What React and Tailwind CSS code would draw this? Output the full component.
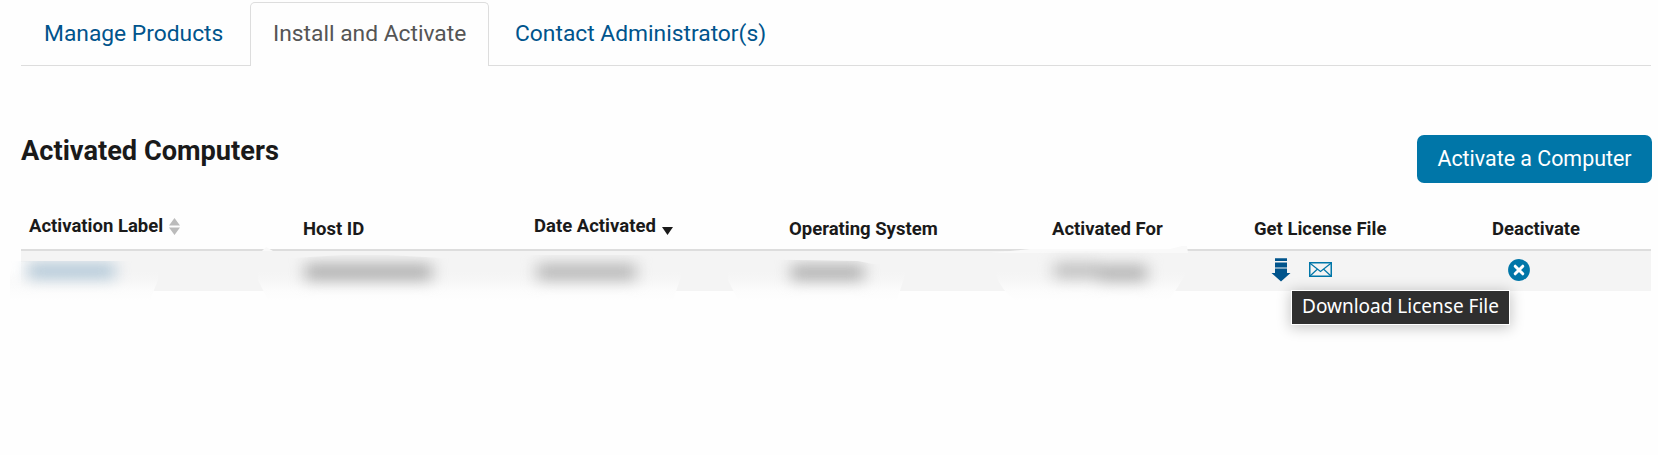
function Tab({ children, active, className }) {
  return (
    <a
      className={
        (active
          ? "border border-b-0 border-[#dddddd] rounded-t-[5px] bg-[#fefefe] text-[#555555] "
          : "border border-transparent text-[#00548c] ") +
        "flex h-[64px] items-start pt-[15px] text-[22.8px] leading-[32px] whitespace-nowrap " +
        className
      }
    >
      {children}
    </a>
  );
}

function SortIcon() {
  return (
    <svg className="ml-[6px] h-[17px] w-[11px] shrink-0" viewBox="0 0 11 17" fill="#bbbbbb">
      <path d="M0 7.500 5.500 0 11 7.500zM0 9.500h11L5.500 17z" />
    </svg>
  );
}

function DownCaret() {
  return (
    <svg className="mt-[10px] ml-[6px] h-[8px] w-[11px] shrink-0" viewBox="0 0 11 8" fill="#1a1a1a">
      <path d="M0 0h11L5.5 8z" />
    </svg>
  );
}

function DownloadIcon() {
  return (
    <svg className="h-[24px] w-[20px]" viewBox="0 0 20 24" fill="#00548c">
      <path d="M4 .2h12v2.800H4zM4 4.500h12V9.500H4zM4 10.500h12V15h3.500L10 23.500.5 15H4z" />
    </svg>
  );
}

function MailIcon() {
  return (
    <svg className="h-[15px] w-[23px]" viewBox="0 0 23 15" fill="none" stroke="#0076a8">
      <rect x=".75" y=".75" width="21.5" height="13.5" strokeWidth="1.5" />
      <path d="M1 1.2 11.5 9.5 22 1.2M1 14 8.3 7.2M22 14l-7.300-6.800" strokeWidth="1.2" />
    </svg>
  );
}

function DeactivateIcon() {
  return (
    <svg className="h-[22px] w-[22px]" viewBox="0 0 22 22">
      <circle cx="11" cy="11" r="10.900" fill="#0076a8" />
      <path d="m7.200 7.200 7.600 7.600m0-7.600-7.600 7.600" stroke="#fff" strokeWidth="3" strokeLinecap="round" />
    </svg>
  );
}

function RedactedValues() {
  return (
    <svg className="pointer-events-none absolute top-[-6px] left-[-21px] h-[60px] w-[1240px]" viewBox="0 0 1240 60">
      <defs>
        <linearGradient id="fade" x1="0" y1="0" x2="0" y2="60" gradientUnits="userSpaceOnUse">
          <stop offset="0" stopColor="#f5f5f5" stopOpacity="0" />
          <stop offset=".42" stopColor="#f5f5f5" stopOpacity="0" />
          <stop offset=".66" stopColor="#fafafa" stopOpacity=".8" />
          <stop offset=".76" stopColor="#fcfcfc" />
          <stop offset=".95" stopColor="#fefefe" />
        </linearGradient>
        <linearGradient id="edge">
          <stop offset="0" stopColor="#fefefe" />
          <stop offset="1" stopColor="#fefefe" stopOpacity="0" />
        </linearGradient>
        <filter id="soft" x="-30%" y="-150%" width="160%" height="400%" colorInterpolationFilters="sRGB">
          <feGaussianBlur stdDeviation="7.5 7" />
        </filter>
        <clipPath id="tops">
          <path d="M0 11h200V13h93l50-3h45l55 3h70V10h20l25 0h150v4l90 1 60 1 15 3h90V6h220v54H0z" />
        </clipPath>
        <clipPath id="labelTop">
          <path d="M0 16h200v44H0z" />
        </clipPath>
      </defs>
      <path d="M262 6l4-4 7 4zM1030 4h140l12-3h5l1 7H990z" fill="#f9f9f9" />
      <rect x="12" y="17" width="22" height="32" fill="url(#edge)" />
      <path d="M10 18h148v17l-8 20H10zM258 18h423v14l-8 23H268l-10-20zM728 18h177v12l-8 25H738l-10-20zM996 18h189v12q-8 14-16 25h-154q-14-10-19-25z" fill="url(#fade)" />
      <g clipPath="url(#labelTop)">
        <rect x="28" y="18" width="87" height="16" fill="#b5cad9" filter="url(#soft)" />
      </g>
      <g clipPath="url(#tops)" filter="none">
        <g filter="url(#soft)">
          <rect x="305" y="18" width="127" height="18" fill="#b5b5b5" />
          <rect x="537" y="18" width="99" height="18" fill="#bcbcbc" />
          <rect x="791" y="19" width="73" height="17" fill="#b5b5b5" />
          <rect x="1054" y="17" width="45" height="17" fill="#c3c3c3" />
          <rect x="1099" y="19" width="48" height="18" fill="#b9b9b9" />
        </g>
      </g>
    </svg>
  );
}

const columns = "grid grid-cols-[274px_231px_255px_263px_202px_238px_1fr] pl-[8px]";

export default function App() {
  return (
    <main className="h-[455px] overflow-hidden bg-[#fefefe] pt-[2px] pr-[7px] pl-[21px] font-['Roboto',sans-serif] text-[#1a1a1a]">
      <nav className="flex h-[64px] border-b border-[#dddddd]">
        <Tab className="w-[229px] pl-[22px]">Manage Products</Tab>
        <Tab active className="w-[239px] pl-[22px]">Install and Activate</Tab>
        <Tab className="pl-[25px]">Contact Administrator(s)</Tab>
      </nav>

      <header className="-mr-px flex h-[117px] items-start justify-between pt-[69px]">
        <h1 className="text-[27.2px] leading-[32px] font-bold">Activated Computers</h1>
        <button className="h-[48px] w-[235px] rounded-[7px] bg-[#0076a8] text-[21.400px] whitespace-nowrap text-white">
          Activate a Computer
        </button>
      </header>

      <section>
        <div className={columns + " mt-[31px] h-[37px] border-b-2 border-[#dddddd] text-[18.500px] leading-[24px] font-bold whitespace-nowrap"}>
          <div className="flex items-center self-start">Activation Label<SortIcon /></div>
          <div className="pt-[3px]">Host ID</div>
          <div className="flex items-center self-start">Date Activated<DownCaret /></div>
          <div className="pt-[3px]">Operating System</div>
          <div className="pt-[3px]">Activated For</div>
          <div className="pt-[3px]">Get License File</div>
          <div className="pt-[3px]">Deactivate</div>
        </div>
        <div className={columns + " relative h-[40px] bg-[#f4f4f4]"}>
          <RedactedValues />
          <div className="col-start-6 flex pt-[7px] pl-[17px]">
            <DownloadIcon />
            <div className="pt-[4px] pl-[18px]"><MailIcon /></div>
          </div>
          <div className="pt-[8px] pl-[16px]"><DeactivateIcon /></div>
          <div className="absolute top-[40px] left-[1271px] flex h-[33px] w-[217px] items-center justify-center bg-[#2f2f2f] pb-[3px] font-['Noto_Sans',sans-serif] text-[19px] whitespace-nowrap text-white shadow-[0_0_0_1px_#fff,0_2px_14px_2px_rgba(0,0,0,0.22)]">
            Download License File
          </div>
        </div>
      </section>
    </main>
  );
}
